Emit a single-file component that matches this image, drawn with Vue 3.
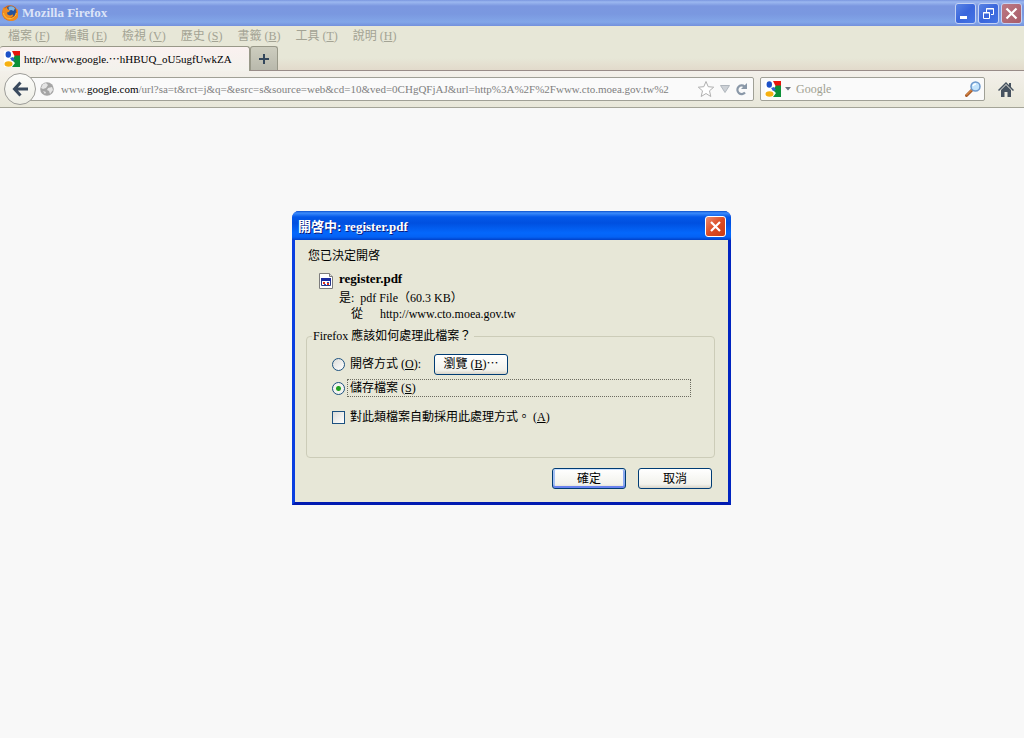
<template>
  <div class="browser">
    <header class="titlebar">
      <svg class="fox" viewBox="0 0 16 16" aria-hidden="true">
        <circle cx="8" cy="8" r="7.800" fill="#d8640f" />
        <circle cx="8.500" cy="6.500" r="5.500" fill="#24539c" />
        <path d="M6.500 2c2-1.500 5-1 6.500 1.500l-1.500 2.500-2-1-2.500.5z" fill="#7cb4e4" />
        <path d="M1 2.500l2 1 2-1.500.5 2 2.500 1.500-1 1.500-2 .5.5 2 2.500 1 2.500-1 1 .5-1.500 2-2.500 1 3 .5 3-2 1.500-4-.5-4c2 1.500 2.500 3 2.500 5 0 4-3 7.500-7.500 7.500S0 12 .3 8z" fill="#f08c20" />
        <path d="M1.500 8c.5 4 4 6.500 8 5.500 2.500-.8 4.500-2.500 4.800-5.500" fill="none" stroke="#fcc43c" />
      </svg>
      <h1 class="app-name">Mozilla Firefox</h1>
      <div class="window-buttons">
        <button type="button" class="win-btn" aria-label="最小化">
          <svg viewBox="0 0 19 19"><path d="M4 12h7v3H4z" fill="#fff" /></svg>
        </button>
        <button type="button" class="win-btn" aria-label="還原">
          <svg viewBox="0 0 19 19" fill="none" stroke="#fff">
            <path d="M7.500 8V4.500h7v6H12M7 5h8" />
            <path d="M4.500 8.500h6v6h-6zM4 9h7" />
          </svg>
        </button>
        <button type="button" class="win-btn win-close" aria-label="關閉">
          <svg viewBox="0 0 19 19"><path d="M4.500 4.500l10 10M14.500 4.500l-10 10" stroke="#fff" stroke-width="2.200" /></svg>
        </button>
      </div>
    </header>

    <nav class="menubar">
      <button v-for="item in menus" :key="item.key" type="button" class="menu-item">
        {{ item.label }} (<u>{{ item.key }}</u>)
      </button>
    </nav>

    <div class="tabs">
      <button type="button" class="tab">
        <svg class="favicon" viewBox="0 0 16 16" aria-hidden="true">
          <path d="M0 0h16v16H0z" fill="#fff" />
          <path d="M8 0h8v6h-5z" fill="#e8140c" />
          <path d="M11 4.500h5V16H8l3-4-3-3z" fill="#0c9038" />
          <ellipse cx="4.300" cy="3.500" rx="2.700" ry="3.300" fill="#1c50c8" />
          <path d="M6 7l3-1 2 3-3 1z" fill="#2c62d4" />
          <ellipse cx="4.500" cy="13" rx="4" ry="2.800" fill="#f6b010" />
        </svg>
        <span>http://www.google.<span class="dots" lang="zh-TW">⋯</span>hHBUQ_oU5ugfUwkZA</span>
      </button>
      <button type="button" class="new-tab" aria-label="開新分頁">
        <svg viewBox="0 0 12 12"><path d="M6 1v10M1 6h10" stroke="#33475c" stroke-width="2" /></svg>
      </button>
    </div>

    <div class="toolbar">
      <button type="button" class="back" aria-label="上一頁">
        <svg viewBox="0 0 16 16" fill="none" stroke="#3a4a5e" stroke-width="3">
          <path d="M8.500 1.500L2.500 8l6 6.500M3 8h13" />
        </svg>
      </button>
      <div class="location">
        <svg class="globe" viewBox="0 0 14 14" aria-hidden="true">
          <circle cx="7" cy="7" r="6.800" fill="#a5a5a5" />
          <path d="M3 2l3-1 2 2-2 3-3 1-2-1zM8 6l4-1 1 3-3 4-1-3-2-1zM3 9l3 1-1 2z" fill="#e4e4e4" />
        </svg>
        <div class="url">
          <input v-model="address" type="text" class="url-input" aria-label="網址" spellcheck="false">
          <div class="url-text" aria-hidden="true">{{ urlParts[0] }}<span class="domain">{{ urlParts[1] }}</span>{{ urlParts[2] }}</div>
        </div>
        <button type="button" class="icon-btn" aria-label="加入書籤">
          <svg width="18" height="18" viewBox="0 0 18 18">
            <path d="M9 1.500l2.200 5.200 5.500.5-4.200 3.600 1.300 5.700L9 13.500l-4.800 3 1.300-5.700-4.200-3.600 5.500-.5z" fill="#fff" stroke="#b0b0b0" />
          </svg>
        </button>
        <button type="button" class="icon-btn" aria-label="瀏覽紀錄">
          <svg width="10" height="8" viewBox="0 0 10 8"><path d="M.5.5h9L5 7.500z" fill="#cdd1d6" stroke="#b0b6bd" /></svg>
        </button>
        <button type="button" class="icon-btn" aria-label="重新載入">
          <svg width="13" height="13" viewBox="0 0 13 13">
            <path d="M9.500 3.500A4.300 4.300 0 1 0 10 9.500" fill="none" stroke="#8a98a8" stroke-width="2.200" />
            <path d="M12 0v6H6z" fill="#8a98a8" />
          </svg>
        </button>
      </div>
      <div class="search">
        <button type="button" class="engine" aria-label="搜尋引擎">
          <svg class="favicon" viewBox="0 0 16 16">
            <path d="M0 0h16v16H0z" fill="#fff" />
            <path d="M8 0h8v6h-5z" fill="#e8140c" />
            <path d="M11 4.500h5V16H8l3-4-3-3z" fill="#0c9038" />
            <ellipse cx="4.300" cy="3.500" rx="2.700" ry="3.300" fill="#1c50c8" />
            <path d="M6 7l3-1 2 3-3 1z" fill="#2c62d4" />
            <ellipse cx="4.500" cy="13" rx="4" ry="2.800" fill="#f6b010" />
          </svg>
          <svg width="6" height="4" viewBox="0 0 6 4"><path d="M0 0h6L3 3.500z" fill="#6a7480" /></svg>
        </button>
        <input v-model="query" type="text" class="search-input" placeholder="Google" aria-label="搜尋">
        <button type="button" class="icon-btn" aria-label="搜尋">
          <svg width="16" height="16" viewBox="0 0 16 16">
            <path d="M1.500 14.500L7 9" stroke="#a85a28" stroke-width="3" stroke-linecap="round" />
            <path d="M1.500 14L6.500 9" stroke="#f0a050" stroke-linecap="round" />
            <circle cx="10.500" cy="5.500" r="4.500" fill="#c4e4fc" stroke="#6c98cc" stroke-width="1.500" />
            <path d="M8 5a3 3 0 0 1 3-2" fill="none" stroke="#fff" stroke-width="1.500" />
          </svg>
        </button>
      </div>
      <button type="button" class="home" aria-label="首頁">
        <svg width="16" height="15" viewBox="0 0 16 15" fill="#46525f">
          <path d="M8 0l3 3V1h2v4l3 3-1 1-7-7-7 7-1-1z" />
          <path d="M8 3l5 5v7H9.500v-5h-3v5H3V8z" />
        </svg>
      </button>
    </div>

    <main class="page">
      <section class="dialog" role="dialog" aria-labelledby="dialog-title">
        <div class="dialog-title">
          <h2 id="dialog-title">開啓中: register.pdf</h2>
          <button type="button" class="dialog-close" aria-label="關閉">
            <svg viewBox="0 0 19 19"><path d="M5 5l9 9M14 5l-9 9" stroke="#fff" stroke-width="2.200" /></svg>
          </button>
        </div>
        <form class="dialog-body" @submit.prevent>
          <p class="intro">您已決定開啓</p>
          <div class="file">
            <svg class="file-icon" viewBox="0 0 14 16" aria-hidden="true">
              <path d="M.5.5h10l3 3v12H.5z" fill="#fff" stroke="#7c7c7c" />
              <path d="M10.500.5v3h3" fill="#ddd" stroke="#7c7c7c" />
              <path d="M2.500 5.500h9v7h-9z" fill="#fff" stroke="#28388c" />
              <path d="M2 5h10v3H2z" fill="#1c2ca0" />
              <path d="M4 9h2v2H4zM8 10h2v2H8z" fill="#e03020" />
              <path d="M8 9h2v1H8zM5 11h2v1H5z" fill="#3050c0" />
            </svg>
            <div class="file-info">
              <strong class="file-name">register.pdf</strong>
              <div class="file-type"><span>是:</span><span>pdf File（60.3 KB）</span></div>
              <div class="file-source"><span>從</span><span>http://www.cto.moea.gov.tw</span></div>
            </div>
          </div>

          <fieldset class="actions">
            <legend>Firefox 應該如何處理此檔案？</legend>
            <div class="option">
              <input id="open-with" v-model="mode" type="radio" name="mode" value="open">
              <label for="open-with">開啓方式 (<u>O</u>):</label>
              <button type="button" class="btn">瀏覽 (<u>B</u>)<span class="dots" lang="zh-TW">⋯</span></button>
            </div>
            <div class="option save">
              <input id="save-file" v-model="mode" type="radio" name="mode" value="save">
              <label for="save-file" :class="{ focused: mode === 'save' }">儲存檔案 (<u>S</u>)</label>
            </div>
            <div class="option">
              <input id="remember" v-model="remember" type="checkbox">
              <label for="remember">對此類檔案自動採用此處理方式。 (<u>A</u>)</label>
            </div>
          </fieldset>

          <div class="buttons">
            <button type="submit" class="btn default">確定</button>
            <button type="button" class="btn">取消</button>
          </div>
        </form>
      </section>
    </main>
  </div>
</template>

<script setup>
import { computed, ref } from 'vue'

const menus = [
  { label: '檔案', key: 'F' },
  { label: '編輯', key: 'E' },
  { label: '檢視', key: 'V' },
  { label: '歷史', key: 'S' },
  { label: '書籤', key: 'B' },
  { label: '工具', key: 'T' },
  { label: '說明', key: 'H' },
]

const address = ref('www.google.com/url?sa=t&rct=j&q=&esrc=s&source=web&cd=10&ved=0CHgQFjAJ&url=http%3A%2F%2Fwww.cto.moea.gov.tw%2')
const query = ref('')
const mode = ref('save')
const remember = ref(false)

// the base domain is drawn darker than the rest of the address
const urlParts = computed(() => {
  const match = address.value.match(/^([^/]*?)([^./]+\.[^./]+)(\/.*)?$/)
  return match ? [match[1], match[2], match[3] || ''] : [address.value, '', '']
})
</script>

<style>
body {
  margin: 0;
  background: #f8f8f8;
}
</style>

<style scoped>
.browser {
  min-height: 100vh;
  display: flex;
  flex-direction: column;
  font-family: "Liberation Serif", "Noto Sans CJK TC", serif;
  font-size: 12px;
  line-height: 16px;
  color: #000;
}
.browser * { box-sizing: border-box; }
button, input {
  font: inherit;
  color: inherit;
  margin: 0;
  padding: 0;
}
button {
  border: 0;
  background: none;
  white-space: nowrap;
}
svg { display: block; flex: none; }
.dots { font-family: "Noto Sans CJK TC", sans-serif; line-height: 1; }

.titlebar {
  display: flex;
  align-items: center;
  height: 26px;
  padding: 0 2px;
  background: linear-gradient(#7a96df 0, #9cb8f0 2px, #7b97e0 6px, #7a98e0 14px, #82a6e8 22px, #7390dc 26px);
}
.fox { width: 16px; height: 16px; }
.app-name {
  flex: 1;
  margin: 0 0 0 4px;
  font-size: 13px;
  color: #dce4f8;
}
.window-buttons { display: flex; gap: 2px; }
.win-btn {
  width: 21px;
  height: 21px;
  border: 1px solid #c4d2f4;
  border-radius: 3px;
  background: linear-gradient(135deg, #5a84e4, #3a66dc 50%, #4474e4);
}
.win-btn svg { width: 19px; height: 19px; }
.win-close { background: linear-gradient(135deg, #bc7884, #a85c68); }

.menubar {
  display: flex;
  gap: 15px;
  height: 20px;
  padding: 0 8px;
  background: #e7e7d7;
}
.menu-item { color: #a3a394; }

.tabs {
  display: flex;
  height: 25px;
  background: linear-gradient(#e7e7d7 50%, #e2dacb);
  border-bottom: 1px solid #988c88;
}
.tab {
  display: flex;
  align-items: center;
  gap: 4px;
  width: 250px;
  height: 25px;
  padding: 0 4px;
  border: 1px solid #989888;
  border-width: 1px 1px 0 0;
  border-radius: 3px 3px 0 0;
  background: linear-gradient(#faf1f0, #f3f2ec);
  font-size: 11px;
}
.favicon { width: 16px; height: 16px; }
.new-tab {
  display: flex;
  align-items: center;
  justify-content: center;
  width: 28px;
  border: 1px solid #989888;
  border-width: 1px 1px 0 1px;
  border-radius: 3px 3px 0 0;
  background: linear-gradient(#cdcdbf, #b9b9ac);
}
.new-tab svg { width: 12px; height: 12px; }

.toolbar {
  display: flex;
  align-items: center;
  height: 37px;
  padding: 0 10px 0 4px;
  background: linear-gradient(#f3f0ea, #e8e7d9);
  border-bottom: 1px solid #a4a497;
}
.back {
  position: relative;
  z-index: 1;
  display: flex;
  align-items: center;
  justify-content: center;
  flex: none;
  width: 32px;
  height: 32px;
  border: 1px solid #9c9c98;
  border-radius: 50%;
  background: linear-gradient(#fdfdfb, #eeeee5);
}
.back svg { width: 16px; height: 16px; }
.location, .search {
  display: flex;
  align-items: center;
  height: 24px;
  border: 1px solid #a0a096;
  border-radius: 2px;
  background: #fafafa;
}
.location {
  flex: 1;
  min-width: 0;
  gap: 5px;
  margin-left: -8px;
  padding: 0 5px 0 11px;
}
.globe { width: 14px; height: 14px; }
.url {
  position: relative;
  flex: 1;
  min-width: 0;
  height: 18px;
  margin-left: 2px;
}
.url-input, .url-text {
  width: 100%;
  height: 18px;
  border: 0;
  font-size: 11px;
  line-height: 18px;
}
.url-input {
  display: block;
  background: none;
  color: transparent;
  caret-color: #000;
  outline: 0;
}
.url-text {
  position: absolute;
  inset: 0;
  overflow: hidden;
  white-space: nowrap;
  color: #808080;
  pointer-events: none;
}
.domain { color: #000; }
.search {
  width: 225px;
  gap: 5px;
  margin: 0 13px 0 6px;
  padding: 0 3px 0 4px;
}
.engine { display: flex; align-items: center; gap: 4px; }
.search-input {
  flex: 1;
  min-width: 0;
  height: 18px;
  border: 0;
  background: none;
  outline: 0;
}
.search-input::placeholder { color: #a0a090; opacity: 1; }

.page {
  flex: 1;
  display: flex;
  justify-content: center;
  align-items: flex-start;
  padding: 103px 1px 24px 0;
  background: #f8f8f8;
}
.dialog {
  width: 439px;
  border: 3px solid #0a3fe0;
  border-top: 0;
  border-right-color: #0024c0;
  border-bottom-color: #001ab0;
  border-radius: 7px 7px 0 0;
  background: #0a50e4;
}
.dialog-title {
  display: flex;
  align-items: center;
  justify-content: space-between;
  height: 29px;
  margin: 0 -3px;
  padding: 2px 5px 0 6px;
  border-radius: 7px 7px 0 0;
  background: linear-gradient(#0c50cc 0, #3c8cfc 2px, #0458e8 6px, #0050e0 12px, #0468fc 22px, #0462f4 26px, #0040c8 29px);
  color: #fff;
  text-shadow: 1px 1px 0 #0c1c80;
}
.dialog-title h2 { margin: 0; font-size: 13px; }
.dialog-close {
  width: 21px;
  height: 21px;
  border: 1px solid #fff;
  border-radius: 3px;
  background: linear-gradient(135deg, #ec8c70, #dc4c24 50%, #c83c14);
}
.dialog-close svg { width: 19px; height: 19px; }
.dialog-body {
  padding: 8px 13px 13px 11px;
  background: #e7e7d7;
}
.intro { margin: 0 0 7px 2px; }
.file { display: flex; gap: 6px; margin-left: 13px; }
.file-icon { width: 14px; height: 16px; margin-top: 2px; }
.file-info { flex: 1; }
.file-name { display: block; font-size: 13px; margin-bottom: 3px; }
.file-type { display: flex; gap: 6px; }
.file-source { display: flex; gap: 17px; padding-left: 12px; }

.actions {
  display: flex;
  flex-direction: column;
  height: 130px;
  min-width: 0;
  margin: 6px 0 10px;
  padding: 9px 23px 0 25px;
  border: 1px solid #ccccb8;
  border-radius: 4px;
}
.actions legend { margin-left: -20px; padding: 0 3px 0 1px; }
.option { display: flex; align-items: center; gap: 5px; height: 22px; }
.option.save { gap: 2px; margin: 2px 0 7px; }
.option.save label { flex: 1; padding: 0 2px; border: 1px solid transparent; }
.option.save label.focused { border: 1px dotted #6c6c60; }
.option .btn { margin-left: 8px; }
input[type="radio"], input[type="checkbox"] {
  appearance: none;
  flex: none;
  width: 13px;
  height: 13px;
  border: 1px solid #1c5180;
  background: linear-gradient(135deg, #dcdcd8, #fff);
}
input[type="radio"] { border-radius: 50%; }
input[type="radio"]:checked {
  background: radial-gradient(circle, #21a121 0 2px, #f4f4f0 3px);
}
input[type="checkbox"]:checked {
  background: #21a121;
  box-shadow: inset 0 0 0 2px #fff;
}

.buttons { display: flex; justify-content: flex-end; gap: 12px; padding-right: 3px; }
.btn {
  width: 74px;
  height: 21px;
  border: 1px solid #003c74;
  border-radius: 3px;
  background: linear-gradient(#fff, #f2f2ec 80%, #d8d4c8);
}
.btn.default { box-shadow: inset 0 1px #cee3ff, inset 0 -2px #6982ee, inset 2px 0 #a4c0f4, inset -2px 0 #8caaf0; }
</style>
